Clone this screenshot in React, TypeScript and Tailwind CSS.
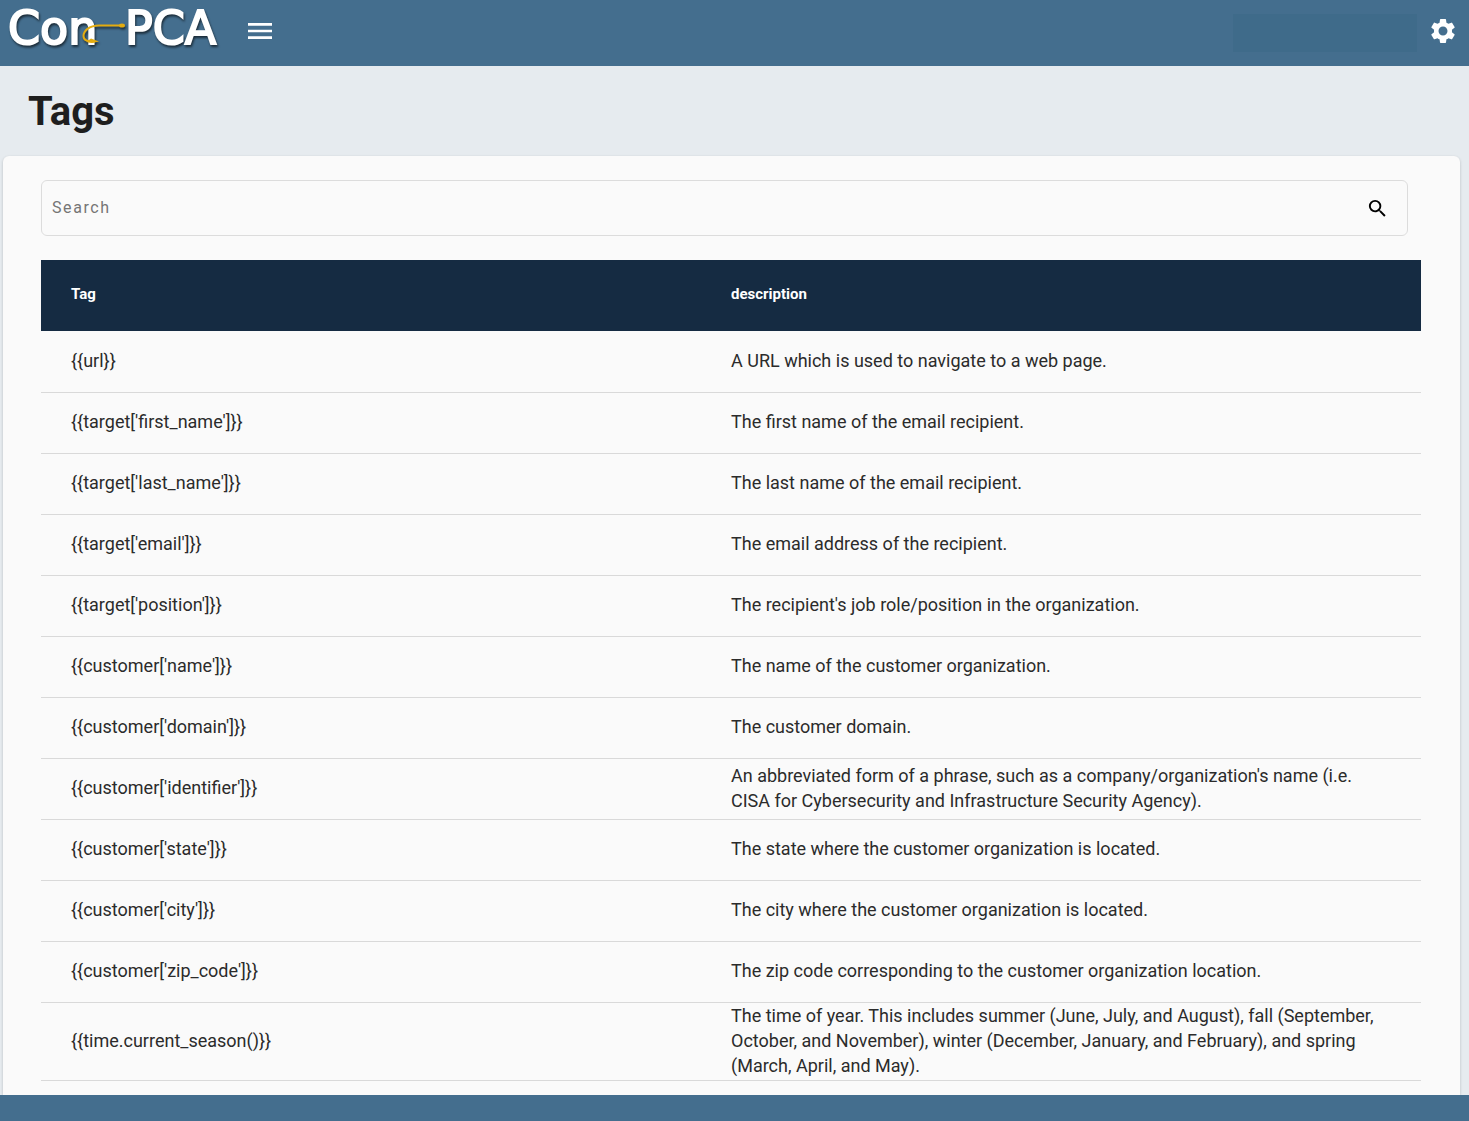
import { MdMenu, MdSearch, MdSettings } from "react-icons/md";

const tags = [
  { tag: "{{url}}", description: "A URL which is used to navigate to a web page." },
  { tag: "{{target['first_name']}}", description: "The first name of the email recipient." },
  { tag: "{{target['last_name']}}", description: "The last name of the email recipient." },
  { tag: "{{target['email']}}", description: "The email address of the recipient." },
  { tag: "{{target['position']}}", description: "The recipient's job role/position in the organization." },
  { tag: "{{customer['name']}}", description: "The name of the customer organization." },
  { tag: "{{customer['domain']}}", description: "The customer domain." },
  {
    tag: "{{customer['identifier']}}",
    description:
      "An abbreviated form of a phrase, such as a company/organization's name (i.e. CISA for Cybersecurity and Infrastructure Security Agency).",
  },
  { tag: "{{customer['state']}}", description: "The state where the customer organization is located." },
  { tag: "{{customer['city']}}", description: "The city where the customer organization is located." },
  { tag: "{{customer['zip_code']}}", description: "The zip code corresponding to the customer organization location." },
  {
    tag: "{{time.current_season()}}",
    description:
      "The time of year. This includes summer (June, July, and August), fall (September, October, and November), winter (December, January, and February), and spring (March, April, and May).",
  },
];

function Logo() {
  return (
    <a href="#" aria-label="Con-PCA" className="block">
      <svg
        viewBox="0 0 222 62"
        className="h-[62px] w-[222px] drop-shadow-[1px_2px_1px_rgba(0,0,0,0.6)]"
        fill="none"
      >
        <g fill="white" stroke="white" strokeWidth="2" fontSize="46" fontFamily="'DejaVu Sans', sans-serif">
          <text x="0" y="44">Con</text>
          <text x="117" y="44">PCA</text>
        </g>
        {/* Fishing hook threaded through the n */}
        <path
          d="M115 25.5H91C81 25.5 75.5 31 75.5 36C75.5 40 79 42 87 41.5"
          stroke="#e3ac10"
          strokeWidth="2"
        />
        <path d="M78 42L83 38.5L91 41.5L84 43Z" fill="#e3ac10" />
        <ellipse cx="114" cy="25.5" rx="3" ry="2" fill="#e3ac10" />
      </svg>
    </a>
  );
}

export default function App() {
  return (
    <div className="flex h-screen flex-col bg-[#e6ebef] font-[Roboto,sans-serif] text-[#2b2b2b]">
      <header className="flex h-[66px] shrink-0 items-start bg-[#446e8e] pr-[11px] pl-2 text-white">
        <Logo />
        <button type="button" aria-label="Menu" className="mt-[15px] ml-3.5">
          <MdMenu size={32} />
        </button>
        <div className="mt-3.5 mr-[11px] ml-auto h-[38px] w-[184px] bg-[#3f6b8a]" />
        <button type="button" aria-label="Settings" className="mt-4">
          <MdSettings size={30} />
        </button>
      </header>

      <main className="flex min-h-0 flex-1 flex-col overflow-hidden">
        <h1 className="px-7 pt-[22px] pb-5 text-[40px] leading-[48px] font-bold text-[#1e1e1e]">Tags</h1>

        <section className="mr-[9px] ml-[3px] min-h-0 flex-1 overflow-hidden rounded-t-md bg-[#fafafa] pt-6 pr-[39px] pl-[38px] shadow-[0_1px_3px_rgba(0,0,0,0.2)]">
          <form
            role="search"
            onSubmit={(event) => event.preventDefault()}
            className="mr-[13px] flex h-14 items-center rounded-md border border-[#dcdcdc] pr-[18px] pl-2.5"
          >
            <input
              type="search"
              aria-label="Search"
              placeholder="Search"
              className="h-full min-w-0 flex-1 bg-transparent pb-0.5 text-base tracking-widest outline-none placeholder:text-[#757575]"
            />
            <button type="submit" aria-label="Search" className="text-black">
              <MdSearch size={23} />
            </button>
          </form>

          <table className="mt-6 w-full table-fixed border-collapse text-left">
            <thead>
              <tr className="h-[71px] bg-[#152b42] text-[15px] text-white">
                <th scope="col" className="w-1/2 pb-0.5 pl-[30px] font-bold">Tag</th>
                <th scope="col" className="w-1/2 pb-0.5 font-bold">description</th>
              </tr>
            </thead>
            <tbody>
              {tags.map((row) => (
                <tr key={row.tag} className="h-[61px] border-b border-[#d9d9d9] text-lg leading-[25px]">
                  <td className="pb-0.5 pl-[30px]">{row.tag}</td>
                  <td className="pr-[30px] pb-0.5">{row.description}</td>
                </tr>
              ))}
            </tbody>
          </table>
        </section>
      </main>

      <footer className="h-[26px] shrink-0 bg-[#446e8e]" />
    </div>
  );
}
